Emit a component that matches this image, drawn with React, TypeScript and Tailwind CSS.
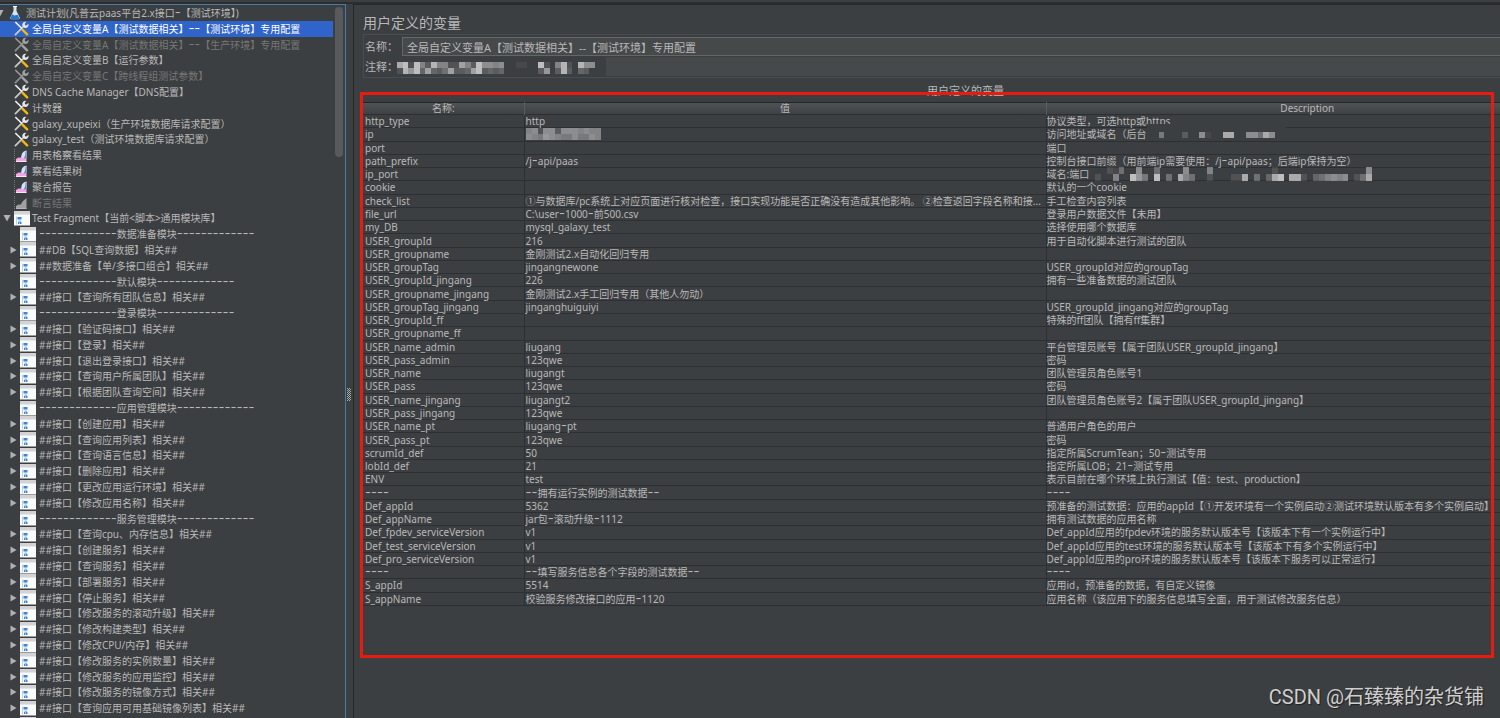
import React from 'react';
import { clsx } from 'clsx';

type IconKind = 'plan' | 'config' | 'listener' | 'controller';
type Toggle = 'open' | 'closed';

interface TreeNode {
  label: string;
  icon: IconKind;
  level: 0 | 1 | 2;
  toggle?: Toggle;
  disabled?: boolean;
  selected?: boolean;
}

interface Variable {
  name: string;
  value?: React.ReactNode;
  description?: React.ReactNode;
}

const config = (label: string, extra: Partial<TreeNode> = {}): TreeNode => ({ label, icon: 'config', level: 1, ...extra });
const listener = (label: string, extra: Partial<TreeNode> = {}): TreeNode => ({ label, icon: 'listener', level: 1, ...extra });
const section = (name: string): TreeNode => ({
  label: `-------------${name}-------------`,
  icon: 'controller',
  level: 2,
});
const group = (label: string): TreeNode => ({ label: `##${label}相关##`, icon: 'controller', level: 2, toggle: 'closed' });

const TREE: TreeNode[] = [
  { label: '测试计划(凡普云paas平台2.x接口-【测试环境】)', icon: 'plan', level: 0, toggle: 'open' },
  config('全局自定义变量A【测试数据相关】--【测试环境】专用配置', { selected: true }),
  config('全局自定义变量A【测试数据相关】--【生产环境】专用配置', { disabled: true }),
  config('全局自定义变量B【运行参数】'),
  config('全局自定义变量C【跨线程组测试参数】', { disabled: true }),
  config('DNS Cache Manager【DNS配置】'),
  config('计数器'),
  config('galaxy_xupeixi（生产环境数据库请求配置）'),
  config('galaxy_test（测试环境数据库请求配置）'),
  listener('用表格察看结果'),
  listener('察看结果树'),
  listener('聚合报告'),
  listener('断言结果', { disabled: true }),
  { label: 'Test Fragment【当前<脚本>通用模块库】', icon: 'controller', level: 1, toggle: 'open' },
  section('数据准备模块'),
  group('DB【SQL查询数据】'),
  group('数据准备【单/多接口组合】'),
  section('默认模块'),
  group('接口【查询所有团队信息】'),
  section('登录模块'),
  group('接口【验证码接口】'),
  group('接口【登录】'),
  group('接口【退出登录接口】'),
  group('接口【查询用户所属团队】'),
  group('接口【根据团队查询空间】'),
  section('应用管理模块'),
  group('接口【创建应用】'),
  group('接口【查询应用列表】'),
  group('接口【查询语言信息】'),
  group('接口【删除应用】'),
  group('接口【更改应用运行环境】'),
  group('接口【修改应用名称】'),
  section('服务管理模块'),
  group('接口【查询cpu、内存信息】'),
  group('接口【创建服务】'),
  group('接口【查询服务】'),
  group('接口【部署服务】'),
  group('接口【停止服务】'),
  group('接口【修改服务的滚动升级】'),
  group('接口【修改构建类型】'),
  group('接口【修改CPU/内存】'),
  group('接口【修改服务的实例数量】'),
  group('接口【修改服务的应用监控】'),
  group('接口【修改服务的镜像方式】'),
  group('接口【查询应用可用基础镜像列表】'),
  { label: '', icon: 'controller', level: 2 },
];

interface MosaicProps {
  rows: string[];
  width: number;
  cellHeight?: number;
  className?: string;
}

// Each hex digit is the brightness of one cell.
const Mosaic: React.FC<MosaicProps> = ({ rows, width, cellHeight = 6, className }) => {
  const height = rows.length * cellHeight;
  return (
    <svg
      width={width}
      height={height}
      viewBox={`0 0 ${rows[0].length} ${height}`}
      preserveAspectRatio="none"
      shapeRendering="crispEdges"
      className={clsx('block max-w-none', className)}
      aria-hidden="true"
    >
      {rows.map((row, y) =>
        row.split('').map((digit, x) => (
          <rect
            key={`${x}-${y}`}
            x={x}
            y={y * cellHeight}
            width={1}
            height={cellHeight}
            fill="#d2d2d2"
            opacity={parseInt(digit, 16) / 15}
          />
        ))
      )}
    </svg>
  );
};

const VARIABLES: Variable[] = [
  { name: 'http_type', value: 'http', description: '协议类型，可选http或https' },
  {
    name: 'ip',
    value: <Mosaic width={75} rows={['7828838887877', '8769876686687']} />,
    description: (
      <span className="relative inline-block">
        访问地址或域名（后台
        <span className="absolute left-full -top-1 flex h-4 w-[139px] items-end bg-[#3c3f41] pb-[2px]">
          <Mosaic width={128} rows={['0060003008100bb00885b8']} />
        </span>
      </span>
    ),
  },
  { name: 'port', description: '端口' },
  {
    name: 'path_prefix',
    value: '/j-api/paas',
    description: '控制台接口前缀（用前端ip需要使用：/j-api/paas；后端ip保持为空）',
  },
  {
    name: 'ip_port',
    description: (
      <span className="relative inline-block">
        域名:端口
        <Mosaic
          className="absolute left-full -top-px ml-[6px]"
          width={277}
          cellHeight={7}
          rows={[
            '00215008005000080007000000000020000000000000008',
            '200700d960d050b7500200022b0504bd0bb20457878025b',
          ]}
        />
      </span>
    ),
  },
  { name: 'cookie', description: '默认的一个cookie' },
  {
    name: 'check_list',
    value: '①与数据库/pc系统上对应页面进行核对检查，接口实现功能是否正确没有造成其他影响。 ②检查返回字段名称和接...',
    description: '手工检查内容列表',
  },
  { name: 'file_url', value: 'C:\\user-1000-前500.csv', description: '登录用户数据文件【未用】' },
  { name: 'my_DB', value: 'mysql_galaxy_test', description: '选择使用哪个数据库' },
  { name: 'USER_groupId', value: '216', description: '用于自动化脚本进行测试的团队' },
  { name: 'USER_groupname', value: '金刚测试2.x自动化回归专用' },
  { name: 'USER_groupTag', value: 'jingangnewone', description: 'USER_groupId对应的groupTag' },
  { name: 'USER_groupId_jingang', value: '226', description: '拥有一些准备数据的测试团队' },
  { name: 'USER_groupname_jingang', value: '金刚测试2.x手工回归专用（其他人勿动）' },
  { name: 'USER_groupTag_jingang', value: 'jinganghuiguiyi', description: 'USER_groupId_jingang对应的groupTag' },
  { name: 'USER_groupId_ff', description: '特殊的ff团队【拥有ff集群】' },
  { name: 'USER_groupname_ff' },
  { name: 'USER_name_admin', value: 'liugang', description: '平台管理员账号【属于团队USER_groupId_jingang】' },
  { name: 'USER_pass_admin', value: '123qwe', description: '密码' },
  { name: 'USER_name', value: 'liugangt', description: '团队管理员角色账号1' },
  { name: 'USER_pass', value: '123qwe', description: '密码' },
  { name: 'USER_name_jingang', value: 'liugangt2', description: '团队管理员角色账号2【属于团队USER_groupId_jingang】' },
  { name: 'USER_pass_jingang', value: '123qwe' },
  { name: 'USER_name_pt', value: 'liugang-pt', description: '普通用户角色的用户' },
  { name: 'USER_pass_pt', value: '123qwe', description: '密码' },
  { name: 'scrumId_def', value: '50', description: '指定所属ScrumTean；50-测试专用' },
  { name: 'lobId_def', value: '21', description: '指定所属LOB；21-测试专用' },
  { name: 'ENV', value: 'test', description: '表示目前在哪个环境上执行测试【值：test、production】' },
  { name: '----', value: '--拥有运行实例的测试数据--', description: '----' },
  {
    name: 'Def_appId',
    value: '5362',
    description: '预准备的测试数据：应用的appId【①开发环境有一个实例启动②测试环境默认版本有多个实例启动】',
  },
  { name: 'Def_appName', value: 'jar包-滚动升级-1112', description: '拥有测试数据的应用名称' },
  { name: 'Def_fpdev_serviceVersion', value: 'v1', description: 'Def_appId应用的fpdev环境的服务默认版本号【该版本下有一个实例运行中】' },
  { name: 'Def_test_serviceVersion', value: 'v1', description: 'Def_appId应用的test环境的服务默认版本号【该版本下有多个实例运行中】' },
  { name: 'Def_pro_serviceVersion', value: 'v1', description: 'Def_appId应用的pro环境的服务默认版本号【该版本下服务可以正常运行】' },
  { name: '----', value: '--填写服务信息各个字段的测试数据--', description: '----' },
  { name: 'S_appId', value: '5514', description: '应用id，预准备的数据，有自定义镜像' },
  { name: 'S_appName', value: '校验服务修改接口的应用-1120', description: '应用名称（该应用下的服务信息填写全面，用于测试修改服务信息）' },
];

// Hyphens get a face with a wider dash, so that separators read as a dashed line.
const Label: React.FC<{ text: string }> = ({ text }) => (
  <>
    {text.split(/(-+)/).map((part, i) =>
      part.startsWith('-') ? (
        <span key={i} className="font-['Inter',sans-serif] text-[13px] leading-[0px]">{part}</span>
      ) : (
        part
      )
    )}
  </>
);

const cell = (content: React.ReactNode) => (typeof content === 'string' ? <Label text={content} /> : content);

const PlanIcon = () => (
  <svg width="12" height="15" viewBox="0 0 12 15" aria-hidden="true">
    <path d="M4.5 1h3v5l3.2 6.6q.6 1.6-1 1.6H2.3q-1.6 0-1-1.6L4.5 6z" fill="#d9e4ee" />
    <path d="M2.8 9.6h1.4l1.2 1.2 1.4-.8h2.1l1.3 3q.5 1.2-1 1.2H2.6q-1.6 0-1-1.2z" fill="#1f7ad6" />
    <path d="M4 1h4v1H4z" fill="#fff" />
  </svg>
);

const ConfigIcon = ({ disabled }: { disabled?: boolean }) => (
  <svg width="15" height="15" viewBox="0 0 16 16" fill="none" aria-hidden="true">
    <path d="M1.5 14.5 10 6" stroke={disabled ? '#8c8c8c' : '#c4c7c8'} strokeWidth="2" strokeLinecap="round" />
    <path
      d="M13.2.8 11.4 2.8l.4 1.6 1.6.4L15.4 3q.6 2.2-1 3.6-1.5 1.2-3.4.6L8.9 5.1q-.5-1.9.8-3.3Q11.2.3 13.2.8z"
      fill={disabled ? '#a2a2a2' : '#e6e8e9'}
    />
    <path d="M.8 1.6 2 .6 9 7.4 7.8 8.6z" fill={disabled ? '#9a9a9a' : '#f2f2f2'} />
    <path d="M9.2 9.4 14 14.2" stroke={disabled ? '#a2a2a2' : '#f3b90c'} strokeWidth="2.6" strokeLinecap="round" />
  </svg>
);

const ListenerIcon = ({ disabled }: { disabled?: boolean }) => (
  <svg width="13" height="15" viewBox="0 0 13 15" aria-hidden="true">
    <path d="M.5 1v13" stroke="#77797a" strokeWidth="1" strokeDasharray="1 1" />
    <path d="M2 13.5V11l2.5-1.5 2 .3L9 6l3.5-3v10.500z" fill={disabled ? '#a0a0a0' : '#f3a6e2'} />
    {!disabled && <path d="M7.5 7q1-4 5-4.500v7q-3 2-5-.5z" fill="#cfe6f8" />}
    {!disabled && <path d="M11.5 3.5h1v6q-1.500 1.500-3 1 2-2 2-7z" fill="#6f86c8" />}
    <path d="M2 13.5h10.500" stroke={disabled ? '#b4b4b4' : '#fbe3f6'} strokeWidth="1" />
  </svg>
);

const ControllerIcon = () => (
  <svg width="16" height="15" viewBox="0 0 16 15" aria-hidden="true">
    <path d="M0 0h16v14.5H0z" fill="#f9fafa" />
    <path d="M0 0h16v3.5H0z" fill="#d3d3d6" />
    <path d="M2 5.500h1v8H2z" fill="#c9cdd4" />
    <path d="M3.500 6h4v2.500H3.500zM4 11h1.500v2H4zM6 11h1.500v2H6z" fill="#3c86dd" />
    <path d="M4.500 8.500h2v1h-2zM4.500 10h2.500v1H4.500z" fill="#8fbcf0" />
  </svg>
);

const NodeIcon = ({ node }: { node: TreeNode }) => {
  if (node.icon === 'plan') return <PlanIcon />;
  if (node.icon === 'config') return <ConfigIcon disabled={node.disabled} />;
  if (node.icon === 'listener') return <ListenerIcon disabled={node.disabled} />;
  return <ControllerIcon />;
};

const TreeRow: React.FC<{ node: TreeNode }> = ({ node }) => (
  <li
    role="treeitem"
    aria-selected={!!node.selected}
    className={clsx(
      'flex min-h-0 items-center',
      node.selected && 'bg-[#2f65ca] text-white',
      node.disabled && 'text-[#777777]'
    )}
  >
    <span
      className={clsx(
        'flex shrink-0 justify-end',
        node.level === 0 && 'w-[4px]',
        node.level === 1 && 'w-[11px]',
        node.level === 2 && 'w-[17px]'
      )}
    >
      {node.toggle && (
        <button type="button" aria-label={`${node.toggle === 'open' ? '折叠' : '展开'} ${node.label}`} className="block">
          <svg width="8" height="8" viewBox="0 0 8 8" fill="#afb1b3" aria-hidden="true">
            {node.toggle === 'open' ? <path d="M.5 1h7L4 7.5z" /> : <path d="M1.500.5 7.500 4l-6 3.500z" />}
          </svg>
        </button>
      )}
    </span>
    <span
      className={clsx(
        'ml-[3px] flex shrink-0',
        node.level === 0 && 'w-[19px] pl-[2px]',
        node.level === 1 && 'w-[18px]',
        node.level === 2 && 'w-[19px]'
      )}
    >
      <NodeIcon node={node} />
    </span>
    <span className="whitespace-nowrap">
      <Label text={node.label} />
    </span>
  </li>
);

const TestPlanTree = () => (
  <aside className="relative flex w-[346px] shrink-0 flex-col overflow-hidden border-t border-r border-[#467ba6]">
    <ul role="tree" className="-mb-[14px] mr-3 grid flex-1 auto-rows-fr">
      {TREE.map((node, i) => (
        <TreeRow key={i} node={node} />
      ))}
    </ul>
    <div className="absolute top-[2px] right-[2px] h-[150px] w-[8px] rounded-sm bg-[#585a5b]" />
  </aside>
);

const Splitter = () => (
  <div className="flex w-[7px] shrink-0 items-center pt-[66px] pl-px">
    <svg width="4" height="13" viewBox="0 0 4 13" fill="#a5a7a8" aria-hidden="true">
      {[0, 2, 4, 6, 8, 10, 12].map((y) => (
        <path key={y} d={`M0 ${y}h1v1H0zM2 ${y}h1v1H2zM1 ${y + 1}h1v1H1zM3 ${y + 1}h1v1H3z`} />
      ))}
    </svg>
  </div>
);

const VariableTable = () => (
  <table className="h-[504px] w-full table-fixed border-collapse border-t border-[#242628] text-left">
    <thead>
      <tr className="h-[12px] bg-linear-to-b from-[#4f5355] to-[#3d4042] text-center leading-[11px]">
        <th className="w-[161px] border-r border-[#5a5d5f] p-0 font-normal">名称:</th>
        <th className="border-r border-[#5a5d5f] p-0 font-normal">值</th>
        <th className="p-0 font-normal">Description</th>
      </tr>
    </thead>
    <tbody>
      {VARIABLES.map((variable, i) => (
        <tr key={i} className="h-[13px] border-y border-[#2d3032]">
          <td className="border-r border-[#2d3032] p-0 pl-[2px] whitespace-nowrap">{cell(variable.name)}</td>
          <td className="border-r border-[#2d3032] p-0 pl-px whitespace-nowrap">{cell(variable.value)}</td>
          <td className="p-0 whitespace-nowrap">{cell(variable.description)}</td>
        </tr>
      ))}
    </tbody>
  </table>
);

const VariablesPanel = () => (
  <main className="relative min-w-0 flex-1 overflow-hidden border-t border-l border-[#26282a] pl-[9px]">
    {/* The panel is wider than the window, its right edge is cut off. */}
    <div className="-mr-[68px]">
      <h1 className="pt-[10px] pb-[3px] text-sm leading-[16px]">用户定义的变量</h1>
      <div className="flex flex-col gap-px border border-[#4a4d4f] pt-[2px] pb-px text-[11px]">
        <div className="flex items-center">
          <label htmlFor="name" className="w-[38px] shrink-0 pl-px">名称：</label>
          <input
            id="name"
            defaultValue="全局自定义变量A【测试数据相关】--【测试环境】专用配置"
            className="h-[19px] min-w-0 flex-1 border border-[#646768] bg-[#45494a] px-1 outline-none"
          />
        </div>
        <div className="relative flex items-center">
          <label htmlFor="comment" className="w-[38px] shrink-0 pl-px">注释：</label>
          <input id="comment" className="h-[19px] min-w-0 flex-1 bg-[#45494a] px-1 outline-none" />
          <div className="absolute inset-y-0 left-[33px] flex w-[209px] items-end bg-[#3c3f41] pb-[2px]">
            <Mosaic width={198} rows={['bd2d73c7722a73d8878001100d207c20c88', '2c9d4a435a334ad34340000003903c30430']} />
          </div>
        </div>
      </div>
      <h2 className="pt-[7px] pb-[5px] text-center text-[11px] leading-[12px]">用户定义的变量</h2>
      <VariableTable />
    </div>
  </main>
);

const App = () => (
  <div className="relative flex h-screen flex-col overflow-hidden bg-[#3c3f41] font-['Noto_Sans','Noto_Sans_CJK_SC',sans-serif] text-[10px] leading-[12px] text-[#b8b8b8]">
    <div className="h-1 shrink-0 border-b-2 border-[#2b2d2f]" />
    <div className="flex min-h-0 flex-1">
      <TestPlanTree />
      <Splitter />
      <VariablesPanel />
    </div>
    <div className="pointer-events-none absolute top-[92px] right-[6px] left-[360px] h-[566px] border-3 border-[#e81c0e]" />
    <p className="absolute right-[16px] bottom-[8px] font-['Roboto','Noto_Sans_CJK_SC',sans-serif] text-xl leading-[26px] text-[#cfcfcf] [text-shadow:1px_1px_1px_#00000080]">
      CSDN @石臻臻的杂货铺
    </p>
  </div>
);

export default App;
